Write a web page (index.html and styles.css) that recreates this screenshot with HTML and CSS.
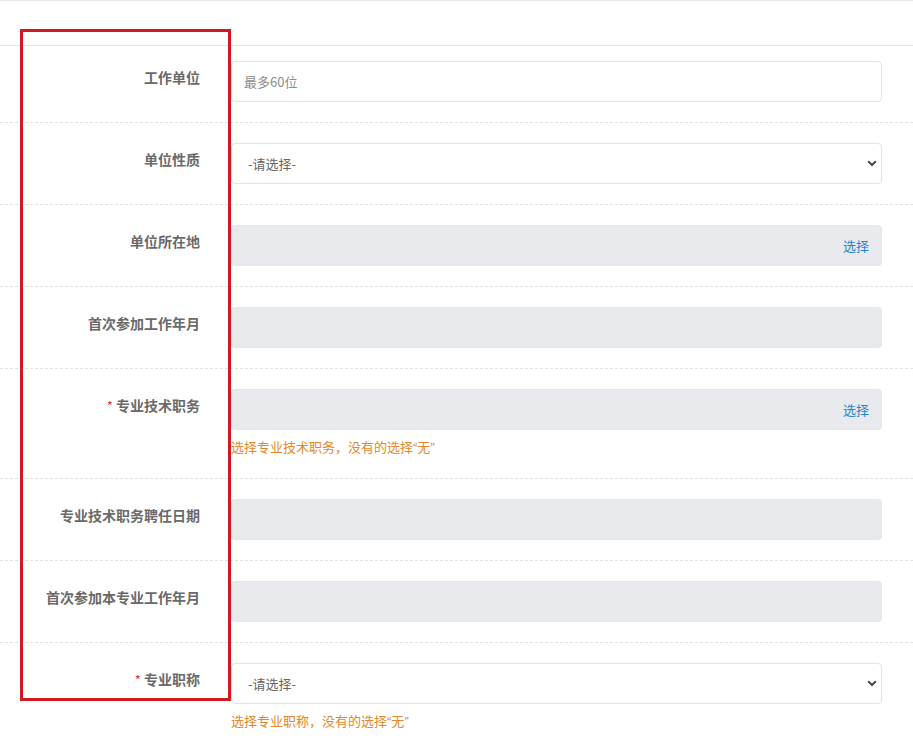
FILE: index.html
```html
<!DOCTYPE html>
<html lang="zh-CN">
<head>
<meta charset="utf-8">
<title>表单</title>
<link rel="stylesheet" href="styles.css">
</head>
<body>
<div class="page">
  <div class="topbar"></div>
  <form class="form">
    <div class="row first">
      <label class="label">工作单位</label>
      <div class="field">
        <input class="input" type="text" placeholder="最多60位">
      </div>
    </div>
    <div class="row">
      <label class="label">单位性质</label>
      <div class="field">
        <div class="select-wrap">
          <select class="select"><option>-请选择-</option></select>
          <svg class="chev" width="10" height="7" viewBox="0 0 10 7"><path d="M1.2 1.3 L5 5 L8.8 1.3" fill="none" stroke="#4a4a4a" stroke-width="2"/></svg>
        </div>
      </div>
    </div>
    <div class="row">
      <label class="label">单位所在地</label>
      <div class="field">
        <div class="input readonly picker"><span class="pick">选择</span></div>
      </div>
    </div>
    <div class="row">
      <label class="label">首次参加工作年月</label>
      <div class="field">
        <div class="input readonly"></div>
      </div>
    </div>
    <div class="row">
      <label class="label"><span class="req">*</span> 专业技术职务</label>
      <div class="field">
        <div class="input readonly picker"><span class="pick">选择</span></div>
        <div class="help">选择专业技术职务，没有的选择<span class="q">“</span>无<span class="q">”</span></div>
      </div>
    </div>
    <div class="row">
      <label class="label">专业技术职务聘任日期</label>
      <div class="field">
        <div class="input readonly"></div>
      </div>
    </div>
    <div class="row">
      <label class="label">首次参加本专业工作年月</label>
      <div class="field">
        <div class="input readonly"></div>
      </div>
    </div>
    <div class="row last">
      <label class="label"><span class="req">*</span> 专业职称</label>
      <div class="field">
        <div class="select-wrap">
          <select class="select"><option>-请选择-</option></select>
          <svg class="chev" width="10" height="7" viewBox="0 0 10 7"><path d="M1.2 1.3 L5 5 L8.8 1.3" fill="none" stroke="#4a4a4a" stroke-width="2"/></svg>
        </div>
        <div class="help">选择专业职称，没有的选择<span class="q">“</span>无<span class="q">”</span></div>
      </div>
    </div>
  </form>
  <div class="highlight"></div>
</div>
</body>
</html>
```

FILE: styles.css
```css
html, body {
  margin: 0;
  padding: 0;
  background: #ffffff;
}

body {
  font-family: "Noto Sans CJK SC", "Noto Sans", "Liberation Sans", sans-serif;
  color: #555;
  overflow: hidden;
}

.page {
  position: relative;
  width: 913px;
  height: 741px;
}

.topbar {
  height: 44px;
  border-top: 1px solid #e6e6e6;
  border-bottom: 1px solid #e4e4e4;
}

.form {
  margin: 0;
}

.row {
  display: flex;
  align-items: flex-start;
  padding: 20px 31px 20px 0;
  border-bottom: 1px dashed #e2e2e2;
}

.row.first {
  padding-top: 15px;
}

.row.last {
  border-bottom: none;
}

.label {
  width: 200px;
  flex: none;
  margin-top: 6px;
  text-align: right;
  font-size: 14px;
  line-height: 20px;
  font-weight: 700;
  color: #6a6a6a;
  white-space: nowrap;
}

.req {
  color: #d9423a;
  font-weight: 400;
  font-size: 13px;
}

.field {
  flex: 1;
  margin-left: 31px;
  min-width: 0;
}

.input {
  display: block;
  box-sizing: border-box;
  width: 100%;
  height: 41px;
  margin: 0;
  padding: 0 12px;
  border: 1px solid #e3e3e3;
  border-radius: 4px;
  background: #fff;
  font-family: inherit;
  font-size: 13px;
  color: #555;
  outline: none;
}

.input::placeholder {
  color: #8c8c8c;
}

.readonly {
  background: #e9eaed;
  border-color: #e5e6e9;
}

.picker {
  display: flex;
  align-items: center;
  justify-content: flex-end;
}

.pick {
  color: #1c86d1;
  font-size: 13px;
  line-height: 18px;
}

.select-wrap {
  position: relative;
}

.select {
  display: block;
  box-sizing: border-box;
  width: 100%;
  height: 41px;
  margin: 0;
  padding: 0 16px;
  border: 1px solid #e3e3e3;
  border-radius: 4px;
  background: #fff;
  font-family: inherit;
  font-size: 13px;
  color: #666;
  appearance: none;
  -webkit-appearance: none;
  outline: none;
}

.chev {
  position: absolute;
  right: 5px;
  top: 17px;
}

.help {
  height: 18px;
  margin-top: 8px;
  margin-bottom: 2px;
  font-size: 13px;
  line-height: 18px;
  color: #e3872c;
}

.q {
  font-family: "Liberation Sans", sans-serif;
  line-height: 1;
}

.highlight {
  position: absolute;
  left: 20px;
  top: 29px;
  width: 205px;
  height: 666px;
  border: 3px solid #cf1a1f;
}
```
